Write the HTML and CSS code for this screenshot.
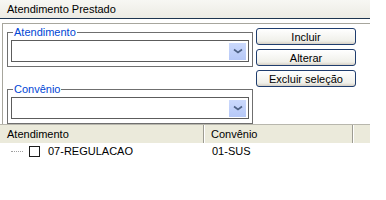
FILE: index.html
```html
<!doctype html>
<html lang="pt">
    <head>
        <title>Atendimento Prestado</title>
        <meta charset="UTF-8"/>
        <link rel="stylesheet" href="styles.css">
    </head>
    <body>
        <div class="titlebar">Atendimento Prestado</div>
        <div class="panel">
            <div class="fields">
                <fieldset class="group">
                    <legend>Atendimento</legend>
                    <div class="combo">
                        <span class="combo-button">
                            <svg width="10" height="6" viewBox="0 0 10 6"><path d="M1 1.5 L5 4.5 L9 1.5" fill="none" stroke="#4d6185" stroke-width="1.6"/></svg>
                        </span>
                    </div>
                </fieldset>
                <fieldset class="group">
                    <legend>Convênio</legend>
                    <div class="combo">
                        <span class="combo-button">
                            <svg width="10" height="6" viewBox="0 0 10 6"><path d="M1 1.5 L5 4.5 L9 1.5" fill="none" stroke="#4d6185" stroke-width="1.6"/></svg>
                        </span>
                    </div>
                </fieldset>
            </div>
            <div class="actions">
                <button>Incluir</button>
                <button>Alterar</button>
                <button>Excluir seleção</button>
            </div>
        </div>
        <div class="grid">
            <div class="grid-head">
                <div class="col col-a">Atendimento</div>
                <div class="col col-b">Convênio</div>
                <div class="filler"></div>
            </div>
            <div class="grid-row">
                <div class="col col-a"><span class="tree-line"></span><span class="check"></span>07-REGULACAO</div>
                <div class="col col-b">01-SUS</div>
            </div>
        </div>
    </body>
</html>
```

FILE: styles.css
```css
body {
    margin: 0;
    background-color: #ffffff;
    font-family: "Liberation Sans", Arial, sans-serif;
    font-size: 11px;
    color: #000000;
}
.titlebar {
    width: 363px;
    height: 18px;
    line-height: 18px;
    padding-left: 7px;
    background: linear-gradient(to bottom, #f7f7f3, #ecebe4);
    border-bottom: 1px solid #1d3550;
}
.panel {
    display: flex;
    width: 367px;
    height: 98px;
    margin: 4px 0 0 2px;
    padding-top: 2px;
    border-top: 1px solid #a7a69d;
    border-left: 1px solid #a7a69d;
}
.fields {
    display: flex;
    flex-direction: column;
    gap: 16px;
    margin-left: 4px;
}
.group {
    width: 238px;
    margin: 0;
    padding: 1px 3px 4px 3px;
    border: 1px solid #6f6f6f;
}
.group legend {
    padding: 0 1px;
    margin-left: 2px;
    line-height: 13px;
    color: #0046d5;
}
.combo {
    display: flex;
    justify-content: flex-end;
    align-items: center;
    height: 20px;
    padding-right: 2px;
    border: 1px solid #5c5c5c;
    background-color: #ffffff;
}
.combo-button {
    display: flex;
    align-items: center;
    justify-content: center;
    width: 17px;
    height: 17px;
    background: linear-gradient(to bottom, #cbd9fc, #b6c8f7);
}
.actions {
    display: flex;
    flex-direction: column;
    gap: 4px;
    margin: 2px 0 0 3px;
}
button {
    width: 100px;
    height: 17px;
    padding: 0;
    font-family: "Liberation Sans", Arial, sans-serif;
    font-size: 11px;
    color: #000000;
    border: 1px solid #1f3d6e;
    border-radius: 3px;
    background: linear-gradient(to bottom, #ffffff, #f0f0ea 80%, #d6d0c5);
}
.grid {
    width: 370px;
    border-top: 1px solid #b8b7ad;
}
.grid-head {
    display: flex;
    height: 18px;
    line-height: 18px;
    background-color: #ebeadb;
}
.grid-head .col {
    border-right: 1px solid #9d9c92;
    box-shadow: 1px 0 0 #ffffff;
}
.col {
    box-sizing: border-box;
    padding-left: 7px;
}
.col-a {
    width: 204px;
}
.col-b {
    width: 149px;
}
.filler {
    flex-grow: 1;
}
.grid-row {
    display: flex;
    height: 17px;
    line-height: 17px;
    align-items: center;
}
.grid-row .col-a {
    display: flex;
    align-items: center;
    padding-left: 11px;
}
.grid-row .col-b {
    padding-left: 8px;
}
.tree-line {
    width: 12px;
    border-top: 1px dotted #a0a0a0;
    margin-right: 6px;
}
.check {
    width: 9px;
    height: 9px;
    border: 1px solid #1c1c1c;
    background-color: #ffffff;
    margin-right: 8px;
}
```
